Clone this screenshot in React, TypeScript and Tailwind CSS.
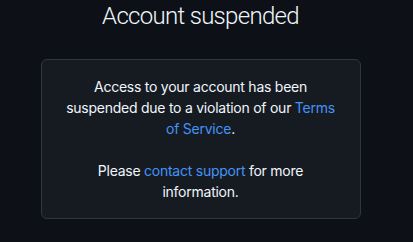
import React from "react";

export default function App() {
  return (
    <div className="min-h-[242px] w-full bg-[#0d1117] flex flex-col items-center pr-3" style={{ fontFamily: "Inter, 'Noto Sans', sans-serif" }}>
      <h1 className="-mt-[2px] text-[24px] leading-[36px] font-light tracking-[-0.7px] text-[#f0f6fc]" style={{ fontFamily: "Roboto, 'Liberation Sans', sans-serif" }}>Account suspended</h1>
      <div className="mt-[25px] w-[320px] rounded-md border border-[#30363d] bg-[#161b22] px-[20px] py-4 text-center text-[14px] leading-[21px] tracking-[-0.25px] text-[#f0f6fc]">
        <p>
          Access to your account has been suspended due to a violation of our{" "}
          <a className="text-[#4493f8]">Terms of Service</a>.
        </p>
        <p className="mt-[21px]">
          Please <a className="text-[#4493f8]">contact support</a> for more information.
        </p>
      </div>
    </div>
  );
}
